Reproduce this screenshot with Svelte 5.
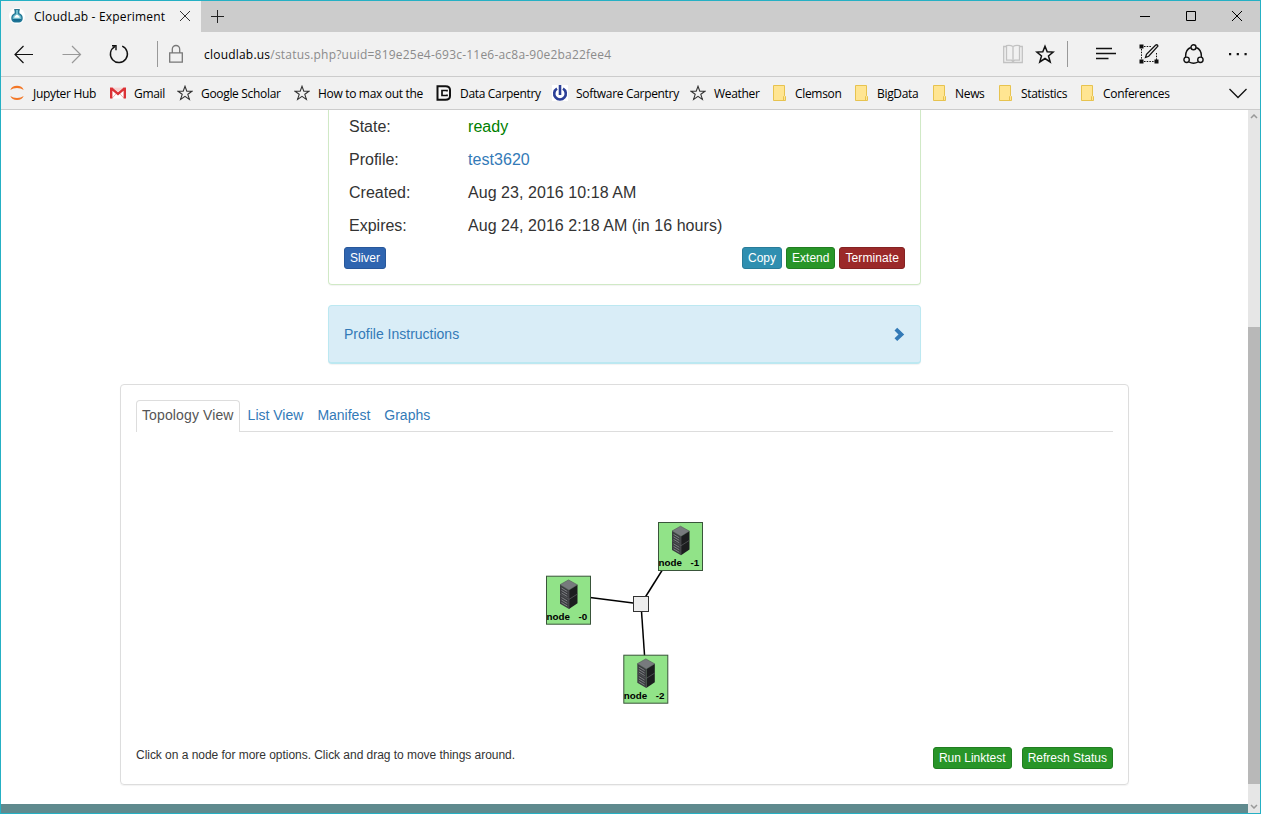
<script>
  const bookmarks = [
    { label: 'Jupyter Hub', icon: 'jupyter' },
    { label: 'Gmail', icon: 'gmail' },
    { label: 'Google Scholar', icon: 'star' },
    { label: 'How to max out the', icon: 'star' },
    { label: 'Data Carpentry', icon: 'dc' },
    { label: 'Software Carpentry', icon: 'power' },
    { label: 'Weather', icon: 'star' },
    { label: 'Clemson', icon: 'folder' },
    { label: 'BigData', icon: 'folder' },
    { label: 'News', icon: 'folder' },
    { label: 'Statistics', icon: 'folder' },
    { label: 'Conferences', icon: 'folder' }
  ];
  const details = [
    { name: 'State:', value: 'ready', kind: 'ready' },
    { name: 'Profile:', value: 'test3620', kind: 'link' },
    { name: 'Created:', value: 'Aug 23, 2016 10:18 AM', kind: '' },
    { name: 'Expires:', value: 'Aug 24, 2016 2:18 AM (in 16 hours)', kind: '' }
  ];
  const tabs = ['Topology View', 'List View', 'Manifest', 'Graphs'];
  const nodes = [
    { id: '-0', x: 410.5, y: 143.7 },
    { id: '-1', x: 522.5, y: 90 },
    { id: '-2', x: 487.8, y: 222.7 }
  ];
  const hub = { x: 505, y: 172 };
</script>

<div class="window">
  <header class="titlebar">
    <div class="tab">
      <svg class="favicon" width="16" height="16" viewBox="0 0 16 16">
        <circle cx="8" cy="8" r="8" fill="#fff" />
        <path d="M5.2 1.700h5.600" stroke="#2b7590" stroke-width="1.400" />
        <path d="M6.300 2v3.600C3.800 6.600 2.700 8.500 3 10.800c.3 1.800 1.400 2.900 3 2.900h4c1.600 0 2.700-1.100 3-2.900.3-2.300-.8-4.200-3.300-5.200V2" fill="#6fbccd" stroke="#257a98" stroke-width="1.400" />
        <path d="M3.500 11h9l-1.300 2.400H4.800z" fill="#166c91" />
        <path d="M5.300 9.800a1.500 1.500 0 0 1 1-1.900 1.800 1.800 0 0 1 3.400 0 1.500 1.500 0 0 1 1 1.900z" fill="#fff" />
      </svg>
      <span class="tab-title">CloudLab - Experiment</span>
      <svg class="tab-close" width="12" height="12" viewBox="0 0 12 12"><path d="M1 1l10 10M11 1L1 11" stroke="#333" fill="none" /></svg>
    </div>
    <svg class="plus" width="13" height="13" viewBox="0 0 13 13"><path d="M0 6.500h13M6.500 0v13" stroke="#222" /></svg>
    <div class="winbtns">
      <svg width="12" height="12" viewBox="0 0 12 12"><path d="M1 6.500h10" stroke="#000" /></svg>
      <svg width="12" height="12" viewBox="0 0 12 12"><path d="M1.500 1.500h9v9h-9z" stroke="#000" fill="none" /></svg>
      <svg width="12" height="12" viewBox="0 0 12 12"><path d="M1 1l10 10M11 1L1 11" stroke="#000" /></svg>
    </div>
  </header>

  <div class="toolbar">
    <svg class="back" width="20" height="20" viewBox="0 0 20 20"><path d="M19 10.500H1M9.500 2L1 10.500 9.500 19" stroke="#111" stroke-width="1.200" fill="none" /></svg>
    <svg class="forward" width="20" height="20" viewBox="0 0 20 20"><path d="M.5 10.500h18M10 2l8.500 8.500L10 19" stroke="#999" stroke-width="1.200" fill="none" /></svg>
    <svg class="reload" width="20" height="20" viewBox="0 0 20 20"><path d="M13.200 2.200A8.500 8.500 0 1 1 5.800 2.600M3 1.700h4v4.500" stroke="#111" stroke-width="1.400" fill="none" /></svg>
    <i class="divider"></i>
    <svg class="lock" width="16" height="20" viewBox="0 0 16 20"><path d="M1.700 8.800h12.600v9.400H1.700zM4.300 9V5.200a3.700 3.700 0 0 1 7.400 0V9" stroke="#777" stroke-width="1.300" fill="none" /></svg>
    <p class="url"><b>cloudlab.us</b>/status.php?uuid=819e25e4-693c-11e6-ac8a-90e2ba22fee4</p>
    <svg class="book" width="20" height="20" viewBox="0 0 20 20"><path d="M3 2.500H.7v16h18.600v-16H17M10 2.500Q7 .8 3.500 1.700v14.500H8.500L10 17.500l1.500-1.300h5V1.700Q13 .8 10 2.500zV17.500" stroke="#c2c2c2" stroke-width="1.300" fill="none" /></svg>
    <svg class="fav" width="20" height="20" viewBox="0 0 20 20"><path d="M10 2.300l2.200 5.500 6 .3-4.700 3.800 1.700 6-5.200-3.400-5.200 3.400 1.700-6-4.700-3.800 6-.3z" stroke="#111" stroke-width="1.500" fill="none" /></svg>
    <i class="divider second"></i>
    <svg class="lines" width="21" height="14" viewBox="0 0 21 14"><path d="M0 1.500h16M0 6.500h20M0 11.500h12.500" stroke="#111" stroke-width="1.300" /></svg>
    <svg class="note" width="20" height="20" viewBox="0 0 20 20">
      <path d="M5 2.500h8M2.500 5v11M5 17.500h11M17.500 9v7" stroke="#111" stroke-dasharray="1.500 1.200" fill="none" />
      <path d="M.5.500h4v4h-4zM.5 15.500h4v4h-4zM15.500 15.500h4v4h-4z" fill="#111" />
      <path d="M6.500 13.500l1-3.200 9.200-9.200q1.700-1 2.200 1L9.700 12.300z" stroke="#111" stroke-width="1.300" fill="#f1f1f1" />
    </svg>
    <svg class="share" width="21" height="20" viewBox="0 0 21 20" fill="none" stroke="#111" stroke-width="1.400">
      <path d="M7.800 3.500Q2.300 5.500 2.600 13M13.200 3.500q5.500 2 5.200 9.500M6 18q4.500 2.500 9 0" />
      <circle cx="10.500" cy="3.300" r="2.500" /><circle cx="3.600" cy="15.800" r="2.700" /><circle cx="17.400" cy="15.800" r="2.700" />
    </svg>
    <svg class="more" width="20" height="4" viewBox="0 0 20 4"><path d="M1 1h2.200v2.200H1zM8.700 1h2.200v2.200H8.700zM16.500 1h2.200v2.200h-2.200z" fill="#111" /></svg>
  </div>

  <nav class="bookmarks">
    {#each bookmarks as b}
      <div class="bookmark">
        <svg width="16" height="16" viewBox="0 0 16 16">
          {#if b.icon === 'jupyter'}
            <path d="M1.300 5Q3 .8 8 .8T14.700 5Q12 3 8 3T1.300 5zM1.300 11Q3 15 8 15t6.700-4Q12 13 8 13t-6.700-2z" fill="#f37726" />
          {:else if b.icon === 'gmail'}
            <path d="M0 2.500h16v11H0z" fill="#fff" />
            <path d="M1.800 13.500l4.700-5.200M14.200 13.500L9.500 8.300" stroke="#e9b4b2" />
            <path d="M0 2.500h2.600L8 7.300l5.400-4.800H16v11h-2.400V5.700L8 10.500 2.400 5.700v7.800H0z" fill="#db3236" />
            <path d="M2.600 2.500h10.800L8 7.300z" fill="#f3d3d2" />
          {:else if b.icon === 'star'}
            <path d="M8 1.300l1.800 4.900h5.200l-4.200 3.100 1.600 5.100L8 11.400l-4.400 3 1.600-5.100L1 6.200h5.200z" stroke="#333" stroke-width="1.100" fill="none" />
          {:else if b.icon === 'dc'}
            <path d="M1.500 1.200H9.500Q14 1.200 14 5v6q0 3.800-4.500 3.800H1.500z" stroke="#111" stroke-width="2" fill="#f8f8f8" />
            <path d="M11 6.500V5.500H6v5h5V9.500" stroke="#111" stroke-width="1.700" fill="none" />
          {:else if b.icon === 'power'}
            <path d="M0 0h16v16H0z" fill="#fff" />
            <path d="M5 3.700a5.800 5.800 0 1 0 6 0" stroke="#2b3f97" stroke-width="2.600" fill="none" />
            <path d="M8 0v10" stroke="#2b3f97" stroke-width="2.600" />
          {:else}
            <path d="M1.500.5h11v10l1 1v4h-12z" fill="#ffe592" stroke="#e7c34f" transform="translate(1 0)" />
            <path d="M12.500 15.500v-4l1-1" stroke="#e7c34f" fill="none" />
          {/if}
        </svg>
        <span>{b.label}</span>
      </div>
    {/each}
    <svg class="chevron" width="18" height="11" viewBox="0 0 18 11"><path d="M.5 1L9 9.500 17.500 1" stroke="#111" stroke-width="1.300" fill="none" /></svg>
  </nav>

  <div class="viewport">
    <div class="page">
      <main>
        <section class="summary">
          <dl>
            {#each details as d}
              <dt>{d.name}</dt><dd class={d.kind}>{d.value}</dd>
            {/each}
          </dl>
          <div class="actions">
            <button class="blue">Sliver</button>
            <div class="group">
              <button class="teal">Copy</button>
              <button class="green">Extend</button>
              <button class="red">Terminate</button>
            </div>
          </div>
        </section>
        <section class="instructions">
          <span>Profile Instructions</span>
          <svg width="12" height="14" viewBox="0 0 12 14"><path d="M1.500 3.500L4.200.8 11.200 7.500l-7 6.500-2.700-2.700 4-3.800z" fill="#337ab7" /></svg>
        </section>
        <section class="topology">
          <div class="tabs">
            {#each tabs as t, i}<span class:active={i === 0}>{t}</span>{/each}
          </div>
          <svg class="graph" width="977" height="314" viewBox="0 0 977 314">
            {#each nodes as n}
              <line x1={hub.x} y1={hub.y} x2={n.x + 22} y2={n.y + 19} stroke="#000" stroke-width="1.500" />
            {/each}
            <rect x={hub.x - 7.500} y={hub.y - 7.500} width="15" height="15" fill="#ededed" stroke="#333" />
            {#each nodes as n}
              <g transform="translate({n.x} {n.y})">
                <rect x="0" y=".5" width="44" height="48" fill="#91e388" stroke="#39553a" />
                <path d="M13.500 9L22 4.200 31 9.200 22.500 14.500z" fill="#777a7d" stroke="#505355" stroke-width=".6" />
                <path d="M13.500 9l9 5.500v18.800l-9-5.300z" fill="#3b3c40" />
                <path d="M31 9.200v18.300l-8.500 5.800V14.500z" fill="#1c1d1f" />
                <path d="M15 12.300l5.800 3.500M15 14.800l5.800 3.500M15 17.300l5.800 3.500M15 21.800l5.800 3.500M15 24.300l5.800 3.500M15 26.800l5.800 3.500" stroke="#85878a" stroke-width=".9" />
                <path d="M13.500 18.500l9 5.200 8.500-5.400" stroke="#55585a" stroke-width=".8" fill="none" />
                <path d="M22.500 14.500v18.500" stroke="#606366" stroke-width=".5" />
                <text x="0" y="44">node</text>
                <text x="32" y="44">{n.id}</text>
              </g>
            {/each}
          </svg>
          <div class="foot">
            <p>Click on a node for more options. Click and drag to move things around.</p>
            <div class="group wide">
              <button class="green">Run Linktest</button>
              <button class="green">Refresh Status</button>
            </div>
          </div>
        </section>
      </main>
      <footer></footer>
    </div>
    <div class="scrollbar">
      <svg width="8" height="5" viewBox="0 0 8 5"><path d="M1 4l3-3 3 3" stroke="#999" stroke-width="1.500" fill="none" /></svg>
      <div class="thumb"></div>
      <svg width="8" height="5" viewBox="0 0 8 5"><path d="M1 1l3 3 3-3" stroke="#999" stroke-width="1.500" fill="none" /></svg>
    </div>
  </div>
</div>

<style>
  :global(body) { margin: 0; overflow: hidden; }
  * { box-sizing: border-box; }
  svg { display: block; flex: none; }
  p, dl, dd { margin: 0; }
  .window { width: 1261px; height: 814px; border: 1px solid #25b0c4; background: #f1f1f1; font-family: "Open Sans", "Noto Sans", sans-serif; display: flex; flex-direction: column; }
  .titlebar { height: 31px; flex: none; background: #ccc; display: flex; align-items: center; }
  .tab { width: 200px; height: 31px; background: #f1f1f1; display: flex; align-items: center; padding: 0 0 1px 8px; }
  .tab-title { width: 132px; margin-left: 9px; font-size: 12px; letter-spacing: .19px; white-space: nowrap; color: #000; }
  .tab-close { margin-left: 13px; }
  .plus { margin-left: 10px; }
  .winbtns { margin-left: auto; display: flex; gap: 34px; padding: 0 17px 2px 0; }
  .toolbar { height: 45px; flex: none; border-bottom: 1px solid #ccc; display: flex; align-items: center; padding-left: 13px; }
  .forward { margin-left: 28px; }
  .reload { margin-left: 27px; }
  .divider { width: 1px; height: 26px; background: #999; margin-left: 28px; }
  .lock { margin-left: 10px; }
  .url { width: 799px; margin-left: 20px; font-size: 12px; letter-spacing: .21px; color: #8b8b8b; white-space: nowrap; }
  .url b { color: #000; font-weight: 400; }
  .fav { margin-left: 12px; }
  .second { margin-left: 12px; }
  .lines { margin-left: 28px; }
  .note { margin-left: 22px; }
  .share { margin-left: 24px; }
  .more { margin-left: 24px; }
  .bookmarks { height: 33px; flex: none; border-bottom: 1px solid #ccc; display: grid; grid-template-columns: 101px 67px 117px 142px 116px 138px 81px 82px 78px 66px 82px 90px 1fr; align-items: center; padding: 0 13px 0 8px; font-size: 12px; color: #000; }
  .bookmark { display: flex; align-items: center; gap: 8px; white-space: nowrap; }
  .bookmark span { letter-spacing: -.32px; }
  .chevron { justify-self: end; }
  .viewport { flex: 1; min-height: 0; display: flex; background: #fff; }
  .page { width: 1247px; display: flex; flex-direction: column; font-family: "Liberation Sans", Arial, sans-serif; color: #333; }
  main { flex: 1; display: flex; flex-direction: column; align-items: center; }
  .summary { width: 593px; height: 175px; border: 1px solid #d0e9c6; border-top: 0; border-radius: 0 0 4px 4px; padding: 0 15px; box-shadow: 0 1px 1px rgba(0,0,0,.05); }
  dl { display: grid; grid-template-columns: 119px 1fr; grid-auto-rows: 33px; padding-left: 5px; font-size: 16px; line-height: 33px; }
  dd { letter-spacing: .05px; }
  .ready { color: #008000; }
  .link { color: #337ab7; }
  .actions { display: flex; justify-content: space-between; margin-top: 5px; }
  .group { display: flex; gap: 4px; }
  .wide { gap: 10px; }
  button { height: 22px; padding: 1px 5px; border: 1px solid; border-radius: 3px; color: #fff; font: 12px/18px "Liberation Sans", Arial, sans-serif; white-space: nowrap; }
  .blue { background: #2f65b0; border-color: #28579a; }
  .teal { background: #2f8fb0; border-color: #297c99; }
  .green { background: #289528; border-color: #217d21; }
  .red { background: #9b2929; border-color: #842222; letter-spacing: .1px; }
  .instructions { width: 593px; height: 59px; margin-top: 20px; border: 1px solid #bce8f1; border-bottom-width: 2px; border-radius: 4px; background: #d9edf7; display: flex; align-items: center; justify-content: space-between; padding: 0 15px; font-size: 14px; color: #337ab7; box-shadow: 0 1px 1px rgba(0,0,0,.05); }
  .topology { width: 1009px; height: 401px; margin-top: 20px; border: 1px solid #ddd; border-radius: 4px; padding: 15px; box-shadow: 0 1px 1px rgba(0,0,0,.05); }
  .tabs { height: 32px; border-bottom: 1px solid #ddd; display: flex; font-size: 14px; line-height: 20px; color: #337ab7; }
  .tabs span { height: 32px; padding: 4px 5px; margin-right: 2px; border: 1px solid transparent; border-bottom: 0; border-radius: 4px 4px 0 0; white-space: nowrap; }
  .tabs .active { color: #555; background: #fff; border-color: #ddd; letter-spacing: .12px; }
  .graph text { font: bold 9.8px "Liberation Sans", Arial, sans-serif; fill: #000; }
  .foot { display: flex; justify-content: space-between; padding-top: 1px; font-size: 12px; line-height: 17px; }
  .foot p { letter-spacing: -.035px; }
  footer { height: 9px; background: #5f8a8e; }
  .scrollbar { width: 12px; background: #e6e6e6; display: flex; flex-direction: column; align-items: center; padding: 4px 0; }
  .thumb { width: 12px; height: 457px; margin: 208px 0 auto; background: #b8b8b8; }
</style>
